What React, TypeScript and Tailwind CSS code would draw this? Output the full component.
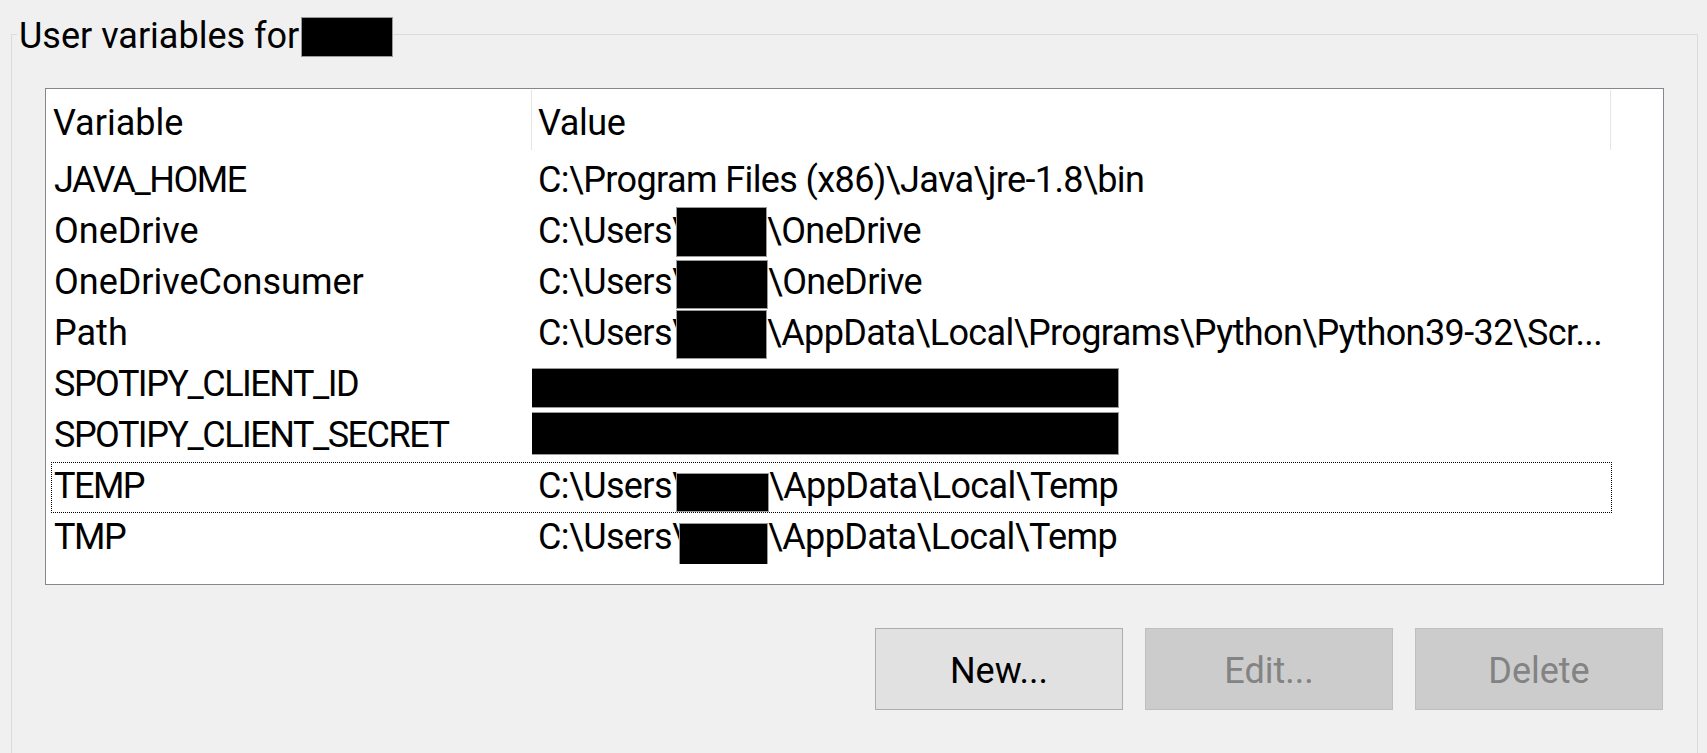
import React from "react";

/* ── data ──────────────────────────────────────────────── */

type Part = string | { box: string };

interface Row {
  name: string;
  value: Part[];
  focused?: boolean;
}

const USERS = "C:\\Users\\";

const ROWS: Row[] = [
  { name: "JAVA_HOME", value: ["C:\\Program Files (x86)\\Java\\jre-1.8\\bin"] },
  { name: "OneDrive", value: [USERS, { box: "mt-0 h-[50px] w-[91px]" }, "\\OneDrive"] },
  { name: "OneDriveConsumer", value: [USERS, { box: "mt-[2px] h-[49px] w-[92px]" }, "\\OneDrive"] },
  {
    name: "Path",
    value: [USERS, { box: "mt-[1px] h-[49px] w-[91px]" }, "\\AppData\\Local\\Programs\\Python\\Python39-32\\Scr..."],
  },
  { name: "SPOTIPY_CLIENT_ID", value: [{ box: "-ml-[7px] mt-[8px] h-[40px] w-[588px]" }] },
  { name: "SPOTIPY_CLIENT_SECRET", value: [{ box: "-ml-[7px] mt-[1px] h-[43px] w-[588px]" }] },
  { name: "TEMP", value: [USERS, { box: "mt-[11px] h-[39px] w-[93px]" }, "\\AppData\\Local\\Temp"], focused: true },
  { name: "TMP", value: [USERS, { box: "ml-[3px] mt-[10px] h-[42px] w-[89px]" }, "\\AppData\\Local\\Temp"] },
];

/* ── pieces ────────────────────────────────────────────── */

function Redact({ className }: { className: string }) {
  return <span className={`relative shrink-0 border border-[#9a9a9a] bg-black ${className}`} />;
}

function Button({ label, disabled }: { label: string; disabled?: boolean }) {
  return (
    <div
      className={`flex h-[82px] w-[248px] items-center justify-center border pt-[5px] leading-[45px] ${
        disabled ? "border-[#bfbfbf] bg-[#cccccc] text-[#838383]" : "border-[#adadad] bg-[#e1e1e1] text-black"
      }`}
    >
      {label}
    </div>
  );
}

/* ── app ───────────────────────────────────────────────── */

export default function App() {
  return (
    <div className="h-[753px] w-[1707px] overflow-hidden bg-[#f0f0f0] pl-[11px] pr-[9px] pt-[11px] font-['Roboto','Noto_Sans',sans-serif] text-[36px] text-black">
      <fieldset className="h-[800px] border border-[#dcdcdc] px-[33px]">
        <legend className="ml-[-28px] pl-[2px]">
          <div className="flex items-start">
            <span className="pt-[5px] leading-[40px]">User variables for</span>
            <Redact className="ml-[2px] mt-[6px] h-[40px] w-[92px]" />
          </div>
        </legend>

        {/* list view */}
        <div className="mt-[31px] h-[497px] border border-[#828790] bg-white">
          <div className="flex h-[67px]">
            <div className="mt-[1px] h-[60px] w-[486px] border-r border-[#e5e5e5] pl-[7px] pt-[11px] leading-[45px]">
              Variable
            </div>
            <div className="mt-[1px] h-[60px] w-[1079px] border-r border-[#e5e5e5] pl-[6px] pt-[11px] leading-[45px] tracking-[-0.4px]">
              Value
            </div>
          </div>

          {ROWS.map((r) => (
            <div
              key={r.name}
              className={`ml-[5px] flex h-[51px] w-[1561px] leading-[49px] ${
                r.focused ? "outline-1 -outline-offset-1 outline-dotted outline-black" : ""
              }`}
            >
              <div
                className={`w-[481px] shrink-0 whitespace-nowrap pl-[3px] ${
                  r.name === r.name.toUpperCase() ? "tracking-[-1.5px]" : ""
                }`}
              >
                {r.name}
              </div>
              <div className="flex min-w-0 flex-1 items-start overflow-hidden whitespace-nowrap pl-[6px] tracking-[-0.6px]">
                {r.value.map((p, i) =>
                  typeof p === "string" ? (
                    <span key={i} className={p === USERS ? "w-[138px] shrink-0" : "shrink-0"}>
                      {p}
                    </span>
                  ) : (
                    <Redact key={i} className={p.box} />
                  )
                )}
              </div>
            </div>
          ))}
        </div>

        {/* buttons */}
        <div className="mt-[43px] flex justify-end gap-[22px] pr-[1px]">
          <Button label="New..." />
          <Button label="Edit..." disabled />
          <Button label="Delete" disabled />
        </div>
      </fieldset>
    </div>
  );
}
